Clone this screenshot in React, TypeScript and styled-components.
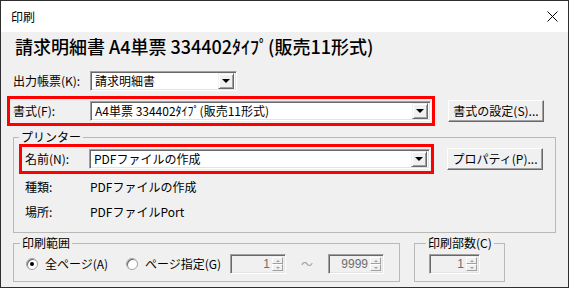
import React from 'react';
import styled, { createGlobalStyle } from 'styled-components';

const GlobalStyle = createGlobalStyle`
  html, body {
    margin: 0;
    padding: 0;
    background: #fff;
  }
  * {
    box-sizing: border-box;
  }
`;

const uiFont = `"Noto Sans CJK JP", "Noto Sans", sans-serif`;

const Window = styled.div`
  width: 569px;
  height: 288px;
  border: 1px solid #2e2e2e;
  display: flex;
  flex-direction: column;
  background: #f0f0f0;
  font-family: ${uiFont};
  font-size: 12px;
  color: #000;
  overflow: hidden;
`;

const TitleBar = styled.div`
  height: 31px;
  flex-shrink: 0;
  background: #fff;
  display: flex;
  align-items: center;
  justify-content: space-between;
  padding: 0 10px 0 10px;
  line-height: 14px;
`;

const Body = styled.div`
  flex: 1;
  padding: 3px 12px 0 12px;
  display: flex;
  flex-direction: column;
`;

const Heading = styled.div`
  font-size: 18px;
  font-weight: 500;
  line-height: 22px;
  height: 22px;
  padding-left: 2px;
  white-space: nowrap;
`;

const Row = styled.div<{ $top?: number }>`
  display: flex;
  align-items: center;
  margin-top: ${p => p.$top ?? 0}px;
`;

const Label = styled.span<{ $w: number }>`
  width: ${p => p.$w}px;
  flex-shrink: 0;
  white-space: nowrap;
  line-height: 16px;
`;

const Highlight = styled.div<{ $left: number; $w: number }>`
  display: flex;
  align-items: center;
  width: ${p => p.$w}px;
  height: 30px;
  margin-left: ${p => p.$left}px;
  padding-left: 3px;
  border: 3px solid #ff0000;
`;

const Combo = styled.div<{ $w: number }>`
  width: ${p => p.$w}px;
  height: 20px;
  display: flex;
  align-items: center;
  background: #fff;
  border: 1px solid;
  border-color: #a0a0a0 #fff #fff #a0a0a0;
  box-shadow: inset 1px 1px 0 #696969, inset -1px -1px 0 #e3e3e3;
  padding: 1px 2px 1px 4px;
`;

const ComboText = styled.span`
  flex: 1;
  white-space: nowrap;
  line-height: 16px;
`;

const DropButton = styled.div`
  width: 16px;
  height: 16px;
  flex-shrink: 0;
  background: #f0f0f0;
  border: 1px solid;
  border-color: #f0f0f0 #696969 #696969 #f0f0f0;
  box-shadow: inset 1px 1px 0 #fff, inset -1px -1px 0 #a0a0a0;
  display: flex;
  align-items: center;
  justify-content: center;
  &::after {
    content: '';
    border-left: 4px solid transparent;
    border-right: 4px solid transparent;
    border-top: 4px solid #000;
  }
`;

const PushButton = styled.div`
  width: 96px;
  height: 22px;
  margin-left: 13px;
  background: #f0f0f0;
  border: 1px solid;
  border-color: #fff #696969 #696969 #fff;
  box-shadow: inset -1px -1px 0 #a0a0a0;
  display: flex;
  align-items: center;
  justify-content: center;
  white-space: nowrap;
  line-height: 16px;
`;

const Group = styled.fieldset<{ $w: number; $padLeft: number; $top: number; $bottom: number }>`
  width: ${p => p.$w}px;
  margin: 0;
  padding: 0 0 ${p => p.$bottom}px ${p => p.$padLeft}px;
  border: 1px solid #b9b9b9;
  min-width: 0;
  & > legend {
    padding: 0 2px;
    line-height: 14px;
    font-size: 12px;
  }
  & > .content {
    margin-top: ${p => p.$top}px;
  }
`;

const InfoRow = styled.div`
  display: flex;
  align-items: center;
  height: 25px;
  padding-left: 6px;
  line-height: 16px;
`;

const BottomRow = styled.div`
  display: flex;
  gap: 14px;
  margin-top: 3px;
`;

const Radio = styled.label<{ $w: number }>`
  display: flex;
  align-items: center;
  width: ${p => p.$w}px;
  flex-shrink: 0;
  white-space: nowrap;
  line-height: 16px;
`;

const RadioDot = styled.span<{ $on?: boolean }>`
  width: 12px;
  height: 12px;
  border-radius: 50%;
  border: 1px solid #a0a0a0;
  background: #fff;
  box-shadow: inset 1px 1px 0 #696969;
  margin-right: 7px;
  display: flex;
  align-items: center;
  justify-content: center;
  &::after {
    content: '';
    width: 4px;
    height: 4px;
    border-radius: 50%;
    background: ${p => (p.$on ? '#000' : 'transparent')};
  }
`;

const Spin = styled.div<{ $w: number; $left?: number }>`
  width: ${p => p.$w}px;
  height: 20px;
  margin-left: ${p => p.$left ?? 0}px;
  display: flex;
  align-items: stretch;
  background: #f0f0f0;
  border: 1px solid;
  border-color: #a0a0a0 #fff #fff #a0a0a0;
  box-shadow: inset 1px 1px 0 #696969, inset -1px -1px 0 #e3e3e3;
  padding: 2px;
  flex-shrink: 0;
`;

const SpinValue = styled.span`
  flex: 1;
  text-align: right;
  color: #6d6d6d;
  line-height: 14px;
  padding-right: 2px;
  font-family: "Liberation Sans", sans-serif;
  font-size: 12px;
`;

const SpinArrows = styled.div`
  width: 11px;
  display: flex;
  flex-direction: column;
`;

const SpinHalf = styled.div<{ $down?: boolean }>`
  flex: 1;
  background: #f0f0f0;
  border: 1px solid;
  border-color: #fff #a0a0a0 #a0a0a0 #fff;
  display: flex;
  align-items: center;
  justify-content: center;
  &::after {
    content: '';
    border-left: 2px solid transparent;
    border-right: 2px solid transparent;
    ${p => (p.$down ? 'border-top: 2px solid #a0a0a0;' : 'border-bottom: 2px solid #a0a0a0;')}
  }
`;

const Tilde = styled.span`
  width: 42px;
  flex-shrink: 0;
  text-align: center;
  color: #a0a0a0;
  line-height: 16px;
`;

function SpinBox({ value, w, left }: { value: string; w: number; left?: number }) {
  return (
    <Spin $w={w} $left={left}>
      <SpinValue>{value}</SpinValue>
      <SpinArrows>
        <SpinHalf />
        <SpinHalf $down />
      </SpinArrows>
    </Spin>
  );
}

function ComboBox({ text, w }: { text: string; w: number }) {
  return (
    <Combo $w={w}>
      <ComboText>{text}</ComboText>
      <DropButton />
    </Combo>
  );
}

export default function App() {
  return (
    <>
      <GlobalStyle />
      <Window>
        <TitleBar>
          <span>印刷</span>
          <svg width="11" height="11" viewBox="0 0 11 11">
            <path d="M0.5 0.5 L10.5 10.5 M10.5 0.5 L0.5 10.5" stroke="#000" strokeWidth="1" />
          </svg>
        </TitleBar>
        <Body>
          <Heading>請求明細書 A4単票 334402ﾀｲﾌﾟ(販売11形式)</Heading>

          <Row $top={14}>
            <Label $w={77}>出力帳票(K):</Label>
            <ComboBox text="請求明細書" w={147} />
          </Row>

          <Row $top={5}>
            <Highlight $left={-6} $w={428}>
              <Label $w={77}>書式(F):</Label>
              <ComboBox text="A4単票 334402ﾀｲﾌﾟ(販売11形式)" w={341} />
            </Highlight>
            <PushButton>書式の設定(S)...</PushButton>
          </Row>

          <Group $w={543} $padLeft={5} $top={0} $bottom={8} style={{ marginTop: 4 }}>
            <legend>プリンター</legend>
            <div className="content">
              <Row>
                <Highlight $left={0} $w={415}>
                  <Label $w={64}>名前(N):</Label>
                  <ComboBox text="PDFファイルの作成" w={341} />
                </Highlight>
                <PushButton>プロパティ(P)...</PushButton>
              </Row>
              <InfoRow>
                <Label $w={65}>種類:</Label>
                <span>PDFファイルの作成</span>
              </InfoRow>
              <InfoRow>
                <Label $w={65}>場所:</Label>
                <span>PDFファイルPort</span>
              </InfoRow>
            </div>
          </Group>

          <BottomRow>
            <Group $w={387} $padLeft={6} $top={4} $bottom={7}>
              <legend>印刷範囲</legend>
              <div className="content">
                <Row style={{ paddingLeft: 6 }}>
                  <Radio $w={100}>
                    <RadioDot $on />
                    全ページ(A)
                  </Radio>
                  <Radio $w={104}>
                    <RadioDot />
                    ページ指定(G)
                  </Radio>
                  <SpinBox value="1" w={56} />
                  <Tilde>～</Tilde>
                  <SpinBox value="9999" w={56} />
                </Row>
              </div>
            </Group>
            <Group $w={91} $padLeft={11} $top={4} $bottom={7}>
              <legend>印刷部数(C)</legend>
              <div className="content">
                <Row>
                  <SpinBox value="1" w={51} left={3} />
                </Row>
              </div>
            </Group>
          </BottomRow>
        </Body>
      </Window>
    </>
  );
}
